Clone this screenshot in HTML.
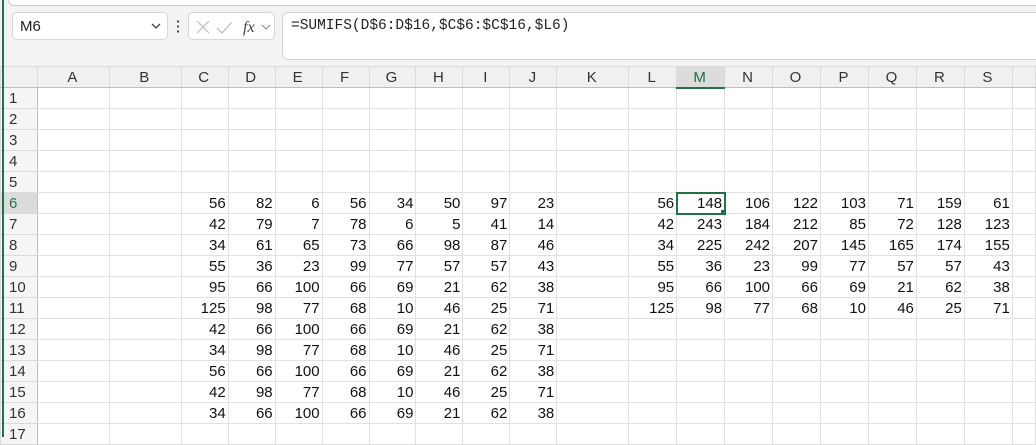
<!DOCTYPE html>
<html><head><style>
body{margin:0;width:1036px;height:437px;overflow:hidden;background:#f3f3f3;font-family:"Liberation Sans",Arial,sans-serif;position:relative}
.top{position:absolute;left:0;top:0;width:1036px;height:60px;background:#f3f3f3}
.topband{position:absolute;left:8px;top:-8px;width:1040px;height:12px;background:#fff;border:1px solid #d0d0d0;border-radius:6px}
.nb{position:absolute;left:12px;top:12px;width:156px;height:28px;background:#fff;border:1px solid #d6d6d6;border-radius:5px;box-sizing:border-box}
.nb span{position:absolute;left:7px;top:5px;font-size:15px;color:#222}
.fb{position:absolute;left:188px;top:12px;width:87px;height:28px;background:#fff;border:1px solid #d6d6d6;border-radius:5px;box-sizing:border-box}
.fx{position:absolute;left:282px;top:12px;width:760px;height:48px;background:#fff;border:1px solid #d6d6d6;border-radius:6px;box-sizing:border-box}
.fx span{position:absolute;left:8px;top:5px;font-family:"Liberation Mono",monospace;font-size:14.5px;color:#222}
.green{position:absolute;left:2px;top:0;width:2px;height:437px;background:#217346;z-index:5}
table{position:absolute;left:0;top:66px;border-collapse:collapse;table-layout:fixed;background:#fff}
tr{height:21px}
td{border:1px solid #e1e1e1;height:21px;padding:1px 2px 0 0;font-size:15px;text-align:right;color:#111;overflow:hidden;white-space:nowrap;box-sizing:border-box}
tr.h td{background:#f0f0f0;text-align:center;color:#333;height:21px;border-color:#dadada;border-bottom:1px solid #bdbdbd}
td.r{background:#f5f5f5;text-align:left;padding-left:8px;color:#333;border-color:#dadada;border-right:1px solid #bdbdbd}
td.sel{outline:2px solid #217346;outline-offset:-1px;position:relative}
tr.h td.m{background:#dcdcdc;color:#217346;border-bottom:2px solid #217346}
</style></head><body>
<div class="top"><div class="topband"></div>
<div class="nb"><span>M6</span><svg style="position:absolute;right:6px;top:9px" width="10" height="8"><path d="M1 2l4 4 4-4" stroke="#444" fill="none" stroke-width="1.3"/></svg></div>
<div style="position:absolute;left:177px;top:19px;width:2px;height:14px;background:radial-gradient(circle,#444 1px,transparent 1.3px) 0 0/2px 5px"></div>
<div class="fb"><svg width="87" height="28"><path d="M8 8l12 12M20 8L8 20" stroke="#bbb" stroke-width="1.2"/><path d="M28 15l5 5 10-11" stroke="#bbb" fill="none" stroke-width="1.2"/><text x="54" y="19" font-family="Liberation Serif" font-style="italic" font-size="16" fill="#444">fx</text><path d="M73 12l4 4 4-4" stroke="#888" fill="none" stroke-width="1.1"/></svg></div>
<div class="fx"><span>=SUMIFS(D$6:D$16,$C$6:$C$16,$L6)</span></div>
</div>
<div class="green"></div>
<table>
<colgroup><col style="width:37px"><col style="width:72px"><col style="width:72px"><col style="width:47px"><col style="width:47px"><col style="width:47px"><col style="width:47px"><col style="width:47px"><col style="width:47px"><col style="width:47px"><col style="width:47px"><col style="width:72px"><col style="width:48px"><col style="width:48px"><col style="width:48px"><col style="width:48px"><col style="width:48px"><col style="width:48px"><col style="width:48px"><col style="width:48px"><col style="width:23px"></colgroup>
<tr class="h"><td></td><td>A</td><td>B</td><td>C</td><td>D</td><td>E</td><td>F</td><td>G</td><td>H</td><td>I</td><td>J</td><td>K</td><td>L</td><td class="m">M</td><td>N</td><td>O</td><td>P</td><td>Q</td><td>R</td><td>S</td><td></td></tr>
<tr><td class="r">1</td><td></td><td></td><td></td><td></td><td></td><td></td><td></td><td></td><td></td><td></td><td></td><td></td><td></td><td></td><td></td><td></td><td></td><td></td><td></td><td></td></tr>
<tr><td class="r">2</td><td></td><td></td><td></td><td></td><td></td><td></td><td></td><td></td><td></td><td></td><td></td><td></td><td></td><td></td><td></td><td></td><td></td><td></td><td></td><td></td></tr>
<tr><td class="r">3</td><td></td><td></td><td></td><td></td><td></td><td></td><td></td><td></td><td></td><td></td><td></td><td></td><td></td><td></td><td></td><td></td><td></td><td></td><td></td><td></td></tr>
<tr><td class="r">4</td><td></td><td></td><td></td><td></td><td></td><td></td><td></td><td></td><td></td><td></td><td></td><td></td><td></td><td></td><td></td><td></td><td></td><td></td><td></td><td></td></tr>
<tr><td class="r">5</td><td></td><td></td><td></td><td></td><td></td><td></td><td></td><td></td><td></td><td></td><td></td><td></td><td></td><td></td><td></td><td></td><td></td><td></td><td></td><td></td></tr>
<tr><td class="r" style="color:#217346;background:#dcdcdc">6</td><td></td><td></td><td>56</td><td>82</td><td>6</td><td>56</td><td>34</td><td>50</td><td>97</td><td>23</td><td></td><td>56</td><td class="sel">148<div style="position:absolute;right:-3px;bottom:-3px;width:5px;height:5px;background:#217346;border:1px solid #fff"></div></td><td>106</td><td>122</td><td>103</td><td>71</td><td>159</td><td>61</td><td></td></tr>
<tr><td class="r">7</td><td></td><td></td><td>42</td><td>79</td><td>7</td><td>78</td><td>6</td><td>5</td><td>41</td><td>14</td><td></td><td>42</td><td>243</td><td>184</td><td>212</td><td>85</td><td>72</td><td>128</td><td>123</td><td></td></tr>
<tr><td class="r">8</td><td></td><td></td><td>34</td><td>61</td><td>65</td><td>73</td><td>66</td><td>98</td><td>87</td><td>46</td><td></td><td>34</td><td>225</td><td>242</td><td>207</td><td>145</td><td>165</td><td>174</td><td>155</td><td></td></tr>
<tr><td class="r">9</td><td></td><td></td><td>55</td><td>36</td><td>23</td><td>99</td><td>77</td><td>57</td><td>57</td><td>43</td><td></td><td>55</td><td>36</td><td>23</td><td>99</td><td>77</td><td>57</td><td>57</td><td>43</td><td></td></tr>
<tr><td class="r">10</td><td></td><td></td><td>95</td><td>66</td><td>100</td><td>66</td><td>69</td><td>21</td><td>62</td><td>38</td><td></td><td>95</td><td>66</td><td>100</td><td>66</td><td>69</td><td>21</td><td>62</td><td>38</td><td></td></tr>
<tr><td class="r">11</td><td></td><td></td><td>125</td><td>98</td><td>77</td><td>68</td><td>10</td><td>46</td><td>25</td><td>71</td><td></td><td>125</td><td>98</td><td>77</td><td>68</td><td>10</td><td>46</td><td>25</td><td>71</td><td></td></tr>
<tr><td class="r">12</td><td></td><td></td><td>42</td><td>66</td><td>100</td><td>66</td><td>69</td><td>21</td><td>62</td><td>38</td><td></td><td></td><td></td><td></td><td></td><td></td><td></td><td></td><td></td><td></td></tr>
<tr><td class="r">13</td><td></td><td></td><td>34</td><td>98</td><td>77</td><td>68</td><td>10</td><td>46</td><td>25</td><td>71</td><td></td><td></td><td></td><td></td><td></td><td></td><td></td><td></td><td></td><td></td></tr>
<tr><td class="r">14</td><td></td><td></td><td>56</td><td>66</td><td>100</td><td>66</td><td>69</td><td>21</td><td>62</td><td>38</td><td></td><td></td><td></td><td></td><td></td><td></td><td></td><td></td><td></td><td></td></tr>
<tr><td class="r">15</td><td></td><td></td><td>42</td><td>98</td><td>77</td><td>68</td><td>10</td><td>46</td><td>25</td><td>71</td><td></td><td></td><td></td><td></td><td></td><td></td><td></td><td></td><td></td><td></td></tr>
<tr><td class="r">16</td><td></td><td></td><td>34</td><td>66</td><td>100</td><td>66</td><td>69</td><td>21</td><td>62</td><td>38</td><td></td><td></td><td></td><td></td><td></td><td></td><td></td><td></td><td></td><td></td></tr>
<tr><td class="r">17</td><td></td><td></td><td></td><td></td><td></td><td></td><td></td><td></td><td></td><td></td><td></td><td></td><td></td><td></td><td></td><td></td><td></td><td></td><td></td><td></td></tr>
</table>
</body></html>
